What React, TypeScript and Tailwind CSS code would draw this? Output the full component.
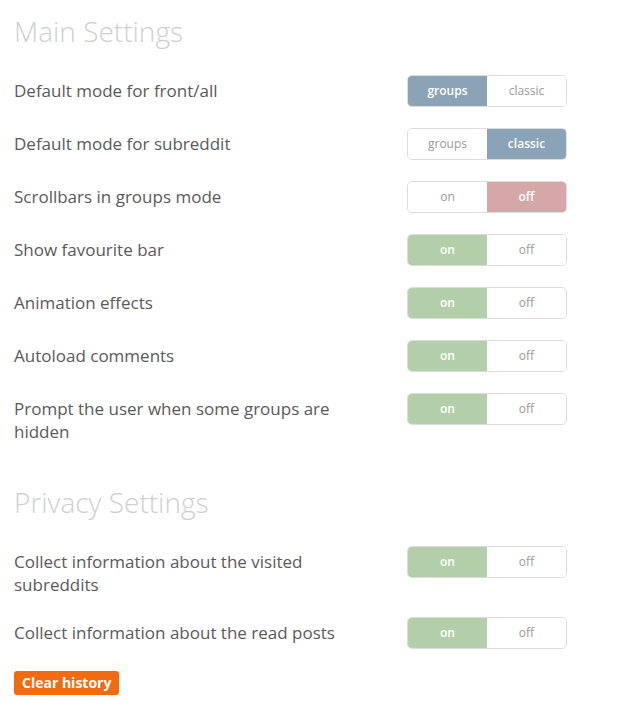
import React from "react";

type Tone = "blue" | "red" | "green";

interface Row {
  label: string;
  left: string;
  right: string;
  active: "left" | "right";
  tone: Tone;
}

const MAIN: Row[] = [
  { label: "Default mode for front/all", left: "groups", right: "classic", active: "left", tone: "blue" },
  { label: "Default mode for subreddit", left: "groups", right: "classic", active: "right", tone: "blue" },
  { label: "Scrollbars in groups mode", left: "on", right: "off", active: "right", tone: "red" },
  { label: "Show favourite bar", left: "on", right: "off", active: "left", tone: "green" },
  { label: "Animation effects", left: "on", right: "off", active: "left", tone: "green" },
  { label: "Autoload comments", left: "on", right: "off", active: "left", tone: "green" },
  { label: "Prompt the user when some groups are hidden", left: "on", right: "off", active: "left", tone: "green" },
];

const PRIVACY: Row[] = [
  { label: "Collect information about the visited subreddits", left: "on", right: "off", active: "left", tone: "green" },
  { label: "Collect information about the read posts", left: "on", right: "off", active: "left", tone: "green" },
];

const TONE_BG: Record<Tone, string> = {
  blue: "bg-[#8ba3b6]",
  red: "bg-[#d6a7a7]",
  green: "bg-[#b3cfa9]",
};

function Toggle({ row }: { row: Row }) {
  const half = (text: string, on: boolean, side: "left" | "right") => (
    <div
      className={
        "flex flex-1 items-center justify-center text-[12px] " +
        (on
          ? TONE_BG[row.tone] + " font-semibold text-white"
          : "bg-white text-[#9a9a9a]") +
        (side === "left" ? " rounded-l-[4px]" : " rounded-r-[4px]")
      }
    >
      {text}
    </div>
  );
  return (
    <div className="flex h-[32px] w-[160px] shrink-0 rounded-[5px] border border-[#dcdcdc]">
      {half(row.left, row.active === "left", "left")}
      {half(row.right, row.active === "right", "right")}
    </div>
  );
}

function Section({ title, rows }: { title: string; rows: Row[] }) {
  return (
    <section>
      <h2 className="mb-[25px] text-[28px] font-light leading-[38px] text-[#cfcfcf]">
        {title}
      </h2>
      {rows.map((r) => (
        <div key={r.label} className="mb-[21px] flex items-start">
          <div className="w-[393px] pr-[50px] pt-[4px] text-[17px] leading-[23px] text-[#5a5a5a]">
            {r.label}
          </div>
          <Toggle row={r} />
        </div>
      ))}
    </section>
  );
}

export default function App() {
  return (
    <div
      className="min-h-[722px] bg-white pl-[14px] pt-[12px]"
      style={{ fontFamily: '"Open Sans", "Liberation Sans", sans-serif' }}
    >
      <Section title="Main Settings" rows={MAIN} />
      <div className="h-[19px]" />
      <Section title="Privacy Settings" rows={PRIVACY} />
      <button className="mt-[-1px] rounded-[3px] bg-[#f26b10] px-[8px] text-[14px] font-bold leading-[24px] text-white">
        Clear history
      </button>
    </div>
  );
}
